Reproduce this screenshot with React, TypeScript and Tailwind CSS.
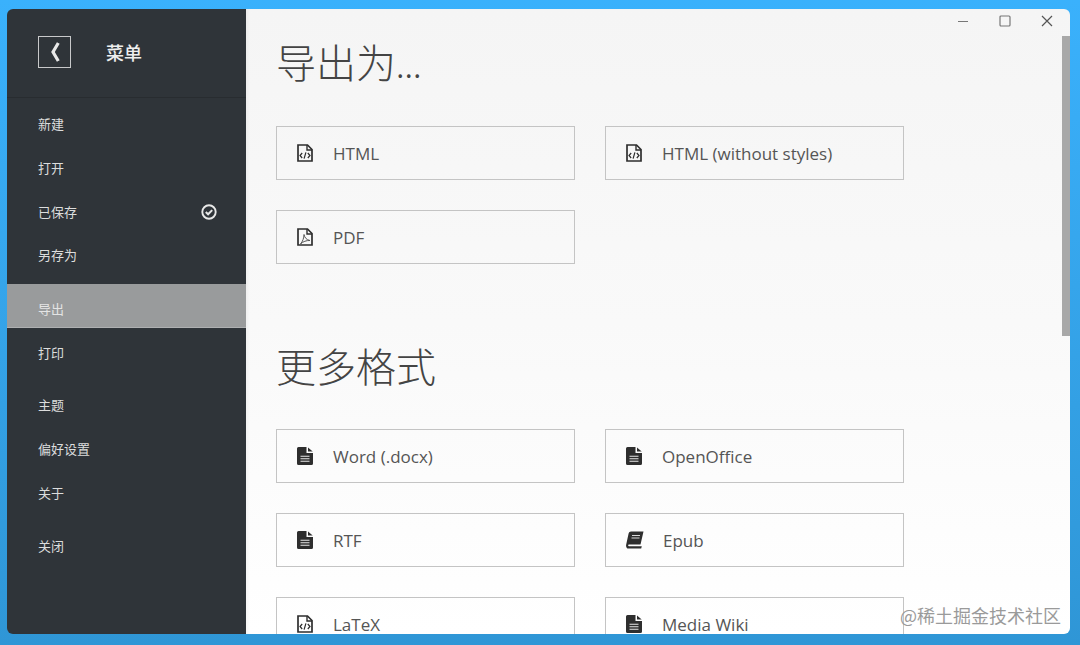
const cjk = "font-['Noto_Sans_CJK_SC',sans-serif]";

function CodeFileIcon() {
  return (
    <svg width="16" height="18" viewBox="0 0 16 18" fill="none" stroke="#2e2e2e">
      <path d="M1 1h9.500L15 5.500V17H1Z" strokeWidth="1.700" />
      <path d="M10 1v5h5" strokeWidth="1.400" />
      <path d="M5.200 9 3 11.500 5.200 14M10.800 9 13 11.500 10.800 14M8.900 8.300l-1.800 6.400" strokeWidth="1.200" />
    </svg>
  );
}

function PdfFileIcon() {
  return (
    <svg width="16" height="18" viewBox="0 0 16 18" fill="none" stroke="#2e2e2e">
      <path d="M1 1h9.500L15 5.500V17H1Z" strokeWidth="1.700" />
      <path d="M10 1v5h5" strokeWidth="1.400" />
      <path d="M7 6.500c.6 3 2.400 5.400 6 6-3.400-.2-7 1-9.500 3.500 2.200-2.600 3.500-6 3.500-9.500Z" strokeWidth="1" stroke="#555" />
    </svg>
  );
}

function SolidFileIcon() {
  return (
    <svg width="16" height="18" viewBox="0 0 16 18">
      <path d="M1.500 0H9.500V6H16V16.500A1.500 1.500 0 0 1 14.500 18H1.500A1.500 1.500 0 0 1 0 16.500V1.500A1.500 1.500 0 0 1 1.500 0Z" fill="#2e2e2e" />
      <path d="M11 0.500 15.700 4.500H11Z" fill="#2e2e2e" />
      <path d="M3.500 9.200h9M3.500 11.700h9M3.500 14.200h9" stroke="#e8e8e8" strokeWidth="1.100" />
    </svg>
  );
}

function BookIcon() {
  return (
    <svg width="18" height="18" viewBox="0 0 18 18">
      <path d="M5 0.500H17.500L14.500 13.500H3.200C2 13.500 1.800 15.200 3 15.200H15.800L15.200 17.500H2.500C0.500 17.500 -0.300 15.500 0.200 13.500L2.600 2.500C2.900 1.200 3.800 0.500 5 0.500Z" fill="#2e2e2e" />
      <path d="M6 4.500h8M5.500 7h8" stroke="#d8d8d8" strokeWidth="1" />
    </svg>
  );
}

function MenuItem({ label, selected, saved, extra }: { label: string; selected?: boolean; saved?: boolean; extra?: string }) {
  return (
    <div
      className={`flex h-11 items-center justify-between pl-[31px] pr-[29px] text-[13px] ${extra ?? ''} ${
        selected ? 'bg-[#999b9c] text-[#e4e4e4] border-b border-[#aeb0b1]' : 'text-[#dcdddd]'
      }`}
    >
      <span>{label}</span>
      {saved && (
        <svg width="16" height="16" viewBox="0 0 16 16" fill="none" stroke="#e8e8e8">
          <circle cx="8" cy="8" r="6.700" strokeWidth="1.900" />
          <path d="M4.800 8l2.300 2.300 4.100-4.200" strokeWidth="2" />
        </svg>
      )}
    </div>
  );
}

function ExportButton({ icon, label, wide }: { icon: React.ReactNode; label: string; wide?: boolean }) {
  return (
    <div className="flex h-[54px] w-[299px] shrink-0 items-center border border-[#c4c4c4] pl-[20px] text-[17px] text-[#555]">
      <span className="flex w-[36px] shrink-0 justify-start">{icon}</span>
      <span className={`pt-[1px] ${wide ? 'ml-[1px]' : ''}`}>{label}</span>
    </div>
  );
}

export default function App() {
  return (
    <div className="relative h-[645px] w-[1080px] overflow-hidden bg-gradient-to-b from-[#3ab1fc] to-[#2f96d6] pl-[7px] pr-[10px] pt-[9px] pb-[11px]">
      <div className="flex h-[625px] overflow-hidden rounded-[6px]">
        {/* sidebar */}
        <aside className={`w-[239px] shrink-0 bg-[#2f3439] ${cjk}`}>
          <div className="flex h-[89px] items-center border-b border-[#282c30] pl-[31px] pb-[2px]">
            <div className="flex h-[32px] w-[33px] items-center justify-center border border-[#c8c9ca]">
              <svg width="10" height="20" viewBox="0 0 10 20" fill="none">
                <path d="M8.300 1 3 10l5.300 9" stroke="#e8e8e8" strokeWidth="3.200" />
              </svg>
            </div>
            <span className="ml-[35px] text-[18px] font-medium text-[#eeeeee]">菜单</span>
          </div>
          <div className="pt-[4px]">
            <MenuItem label="新建" />
            <MenuItem label="打开" />
            <MenuItem label="已保存" saved />
            <MenuItem label="另存为" extra="pb-[2px]" />
            <MenuItem label="导出" selected extra="mt-[6px] pt-[6px]" />
            <MenuItem label="打印" extra="pt-[6px]" />
            <MenuItem label="主题" extra="mt-[8px] pt-[6px]" />
            <MenuItem label="偏好设置" extra="pt-[6px]" />
            <MenuItem label="关于" extra="pt-[6px]" />
            <MenuItem label="关闭" extra="mt-[9px] pt-[6px]" />
          </div>
        </aside>

        {/* content */}
        <main className="relative min-w-0 flex-1 overflow-hidden bg-gradient-to-b from-[#f5f5f5] via-[#f9f9f9] to-[#ffffff] pl-[30px] font-['Open_Sans',sans-serif] shadow-[inset_4px_0_4px_-3px_rgba(0,0,0,0.06)]">
          <div className="absolute right-0 top-0 flex gap-[30px] pr-[17px] pt-[6px]">
            <svg width="12" height="12" viewBox="0 0 12 12" fill="none">
              <path d="M1 6.500h10" stroke="#777" strokeWidth="1.200" />
            </svg>
            <svg width="12" height="12" viewBox="0 0 12 12" fill="none">
              <rect x="1" y="1" width="10" height="10" rx="1" stroke="#777" strokeWidth="1.200" />
            </svg>
            <svg width="12" height="12" viewBox="0 0 12 12" fill="none">
              <path d="M1 1l10 10M11 1 1 11" stroke="#555" strokeWidth="1.200" />
            </svg>
          </div>
          <div className="absolute right-0 top-[27px] h-[300px] w-[8px] bg-[#a8a8a8]" />

          <h1 className={`pt-[24px] text-[40px] leading-[56px] font-light text-[#444] ${cjk}`}>
            导出为<span className="text-[34px]">...</span>
          </h1>
          <div className="mt-[34px] grid w-[628px] grid-cols-[299px_299px] gap-[30px]">
            <ExportButton icon={<CodeFileIcon />} label="HTML" />
            <ExportButton icon={<CodeFileIcon />} label="HTML (without styles)" />
            <ExportButton icon={<PdfFileIcon />} label="PDF" />
          </div>

          <h1 className={`mt-[73px] text-[40px] leading-[56px] font-light text-[#444] ${cjk}`}>更多格式</h1>
          <div className="mt-[36px] grid w-[628px] grid-cols-[299px_299px] gap-[30px]">
            <ExportButton icon={<SolidFileIcon />} label="Word (.docx)" />
            <ExportButton icon={<SolidFileIcon />} label="OpenOffice" />
            <ExportButton icon={<SolidFileIcon />} label="RTF" />
            <ExportButton icon={<BookIcon />} label="Epub" wide />
            <ExportButton icon={<CodeFileIcon />} label="LaTeX" />
            <ExportButton icon={<SolidFileIcon />} label="Media Wiki" />
          </div>
        </main>
      </div>

      <div className={`absolute left-[900px] top-[603px] text-[18px] leading-[24px] text-[#9a9a9a] ${cjk}`}>@稀土掘金技术社区</div>
    </div>
  );
}
